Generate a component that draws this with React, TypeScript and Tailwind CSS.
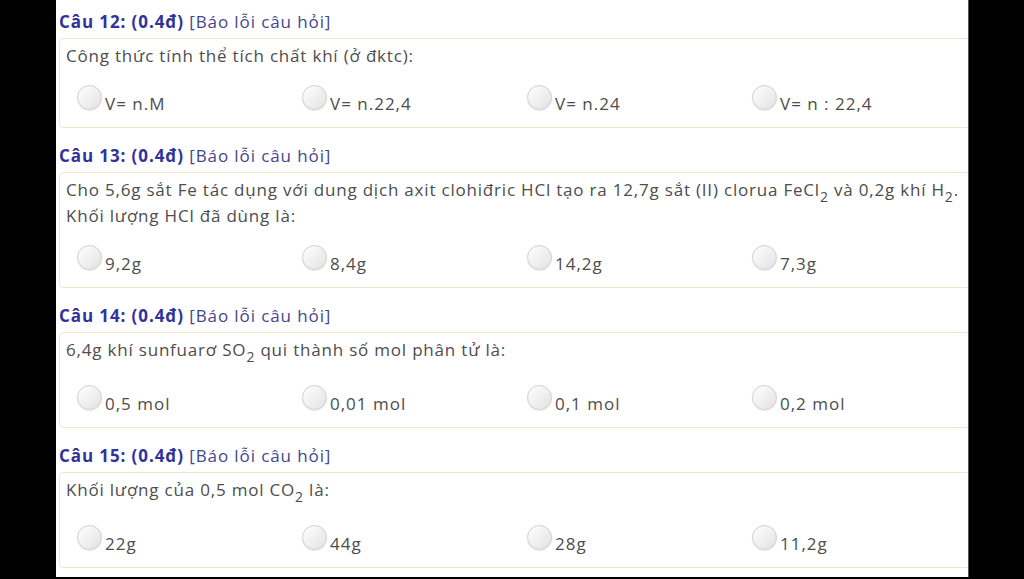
import React from 'react'

type Question = {
    num: number
    lines: React.ReactNode[]
    hasSub: boolean
    options: string[]
}

const questions: Question[] = [
    {
        num: 12,
        lines: ['Công thức tính thể tích chất khí (ở đktc):'],
        hasSub: false,
        options: ['V= n.M', 'V= n.22,4', 'V= n.24', 'V= n : 22,4'],
    },
    {
        num: 13,
        lines: [
            <>Cho 5,6g sắt Fe tác dụng với dung dịch axit clohiđric HCl tạo ra 12,7g sắt (II) clorua FeCl<Sub>2</Sub> và 0,2g khí H<Sub>2</Sub>.</>,
            'Khối lượng HCl đã dùng là:',
        ],
        hasSub: false,
        options: ['9,2g', '8,4g', '14,2g', '7,3g'],
    },
    {
        num: 14,
        lines: [<>6,4g khí sunfuarơ SO<Sub>2</Sub> qui thành số mol phân tử là:</>],
        hasSub: true,
        options: ['0,5 mol', '0,01 mol', '0,1 mol', '0,2 mol'],
    },
    {
        num: 15,
        lines: [<>Khối lượng của 0,5 mol CO<Sub>2</Sub> là:</>],
        hasSub: true,
        options: ['22g', '44g', '28g', '11,2g'],
    },
]

function Sub({ children }: { children: React.ReactNode }) {
    return <span className="relative top-[6px] text-[14px] leading-none">{children}</span>
}

function Radio() {
    return (
        <span className="inline-block w-[25px] h-[25px] shrink-0 rounded-full border border-[#d0d0d0] bg-linear-to-br from-white to-[#e2e2e2] shadow-[0_1px_1px_rgba(0,0,0,0.1)]" />
    )
}

function QuestionBlock({ q }: { q: Question }) {
    return (
        <div className="mt-[16px] first:mt-0">
            <div className="pl-[3px] mb-[4px] text-[17px] leading-[24px] tracking-[0.9px] text-[#30339a] whitespace-nowrap">
                <span className="font-bold">Câu {q.num}: (0.4đ)</span>{' '}
                <span className="text-[#43468f]">[Báo lỗi câu hỏi]</span>
            </div>
            <div className="ml-[3px] w-[940px] border border-[#f2e6d0] rounded-[4px] pt-[4px] pb-[10px] pl-[6px]">
                {q.lines.map((line, i) => (
                    <div key={i} className="text-[17px] leading-[26px] tracking-[0.8px] text-[#4d4d4d] whitespace-nowrap">
                        {line}
                    </div>
                ))}
                <div className={`flex items-baseline ml-[11px] ${q.hasSub ? 'mt-[22px]' : 'mt-[16px]'}`}>
                    {q.options.map((opt) => (
                        <label key={opt} className="w-[225px] flex items-baseline gap-[3px] text-[17px] leading-[26px] tracking-[1px] text-[#4d4d4d]">
                            <Radio />
                            <span>{opt}</span>
                        </label>
                    ))}
                </div>
            </div>
        </div>
    )
}

export default function App() {
    return (
        <div className="flex h-[579px] bg-black" style={{ fontFamily: '"Open Sans", sans-serif' }}>
            <div className="w-[56px] shrink-0" />
            <div className="w-[912px] h-[577px] shrink-0 bg-white overflow-hidden pt-[10px]">
                {questions.map((q) => (
                    <QuestionBlock key={q.num} q={q} />
                ))}
            </div>
            <div className="w-px h-[577px] bg-[#5a5a5a]" />
        </div>
    )
}
